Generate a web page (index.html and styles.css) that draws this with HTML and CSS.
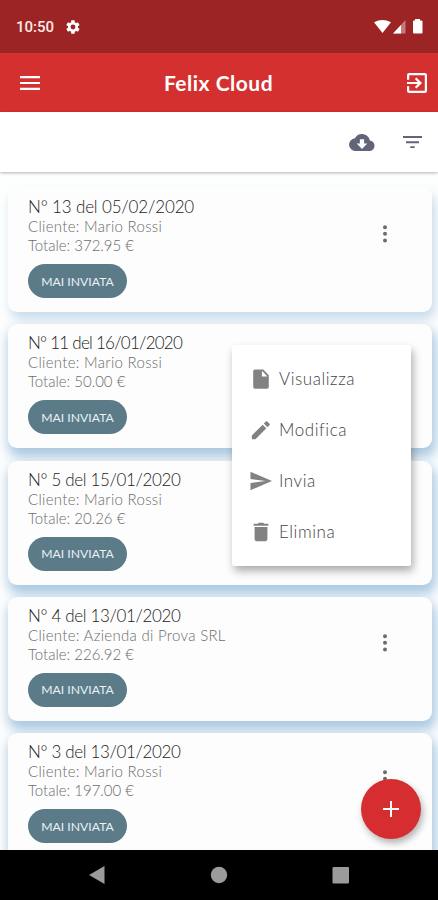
FILE: index.html
```
<!DOCTYPE html>
<html lang="it">
<head>
    <meta charset="UTF-8">
    <meta name="viewport" content="width=device-width, initial-scale=1.0">
    <title>Felix Cloud</title>
    <link rel="stylesheet" href="styles.css">
</head>
<body>
    <div class="status-bar">
        <span class="clock">10:50</span>
        <svg class="status-gear" viewBox="0 0 24 24"><path fill-rule="evenodd" d="M19.4 13a7.500 7.500 0 0 0 0-2l2.100-1.600a.5.5 0 0 0 .1-.7l-2-3.400a.5.5 0 0 0-.6-.2l-2.500 1a7.300 7.300 0 0 0-1.700-1L14.400 2.400a.5.5 0 0 0-.5-.4h-4a.5.5 0 0 0-.5.4L9 5.100a7.300 7.300 0 0 0-1.700 1l-2.500-1a.5.5 0 0 0-.6.2l-2 3.400a.5.500 0 0 0 .1.700L4.500 11a7.500 7.500 0 0 0 0 2l-2.200 1.600a.5.5 0 0 0-.1.700l2 3.400a.5.5 0 0 0 .6.2l2.500-1a7.300 7.300 0 0 0 1.700 1l.4 2.700a.5.5 0 0 0 .5.4h4a.5.5 0 0 0 .5-.4l.4-2.700a7.300 7.300 0 0 0 1.700-1l2.500 1a.5.5 0 0 0 .6-.2l2-3.400a.5.5 0 0 0-.1-.7zM12 15.600a3.600 3.600 0 1 1 0-7.200 3.600 3.600 0 0 1 0 7.200z"/></svg>
        <svg class="status-signals" viewBox="0 0 50 16">
            <path d="M0 3.200Q8.500-1.400 17 3.200L8.500 14z"/>
            <path opacity=".4" d="M31.500 1v13.500H19z"/>
            <path d="M27 6v8.500H19z"/>
            <path d="M41 1.500V0h5v1.500h1.500q1 0 1 1v11q0 1-1 1h-7.500q-1 0-1-1v-11q0-1 1-1z"/>
        </svg>
    </div>

    <header class="app-bar">
        <svg class="icon-menu" viewBox="0 0 20 14"><path d="M0 0h20v2.200H0zM0 5.900h20v2.200H0zM0 11.800h20V14H0z"/></svg>
        <h1 class="app-title">Felix Cloud</h1>
        <svg class="icon-exit" viewBox="3 3 18 18"><path d="M10.090 15.590L11.500 17l5-5-5-5-1.410 1.410L12.670 11H3v2h9.670l-2.580 2.590zM19 3H5a2 2 0 0 0-2 2v4h2V5h14v14H5v-4H3v4a2 2 0 0 0 2 2h14a2 2 0 0 0 2-2V5a2 2 0 0 0-2-2z"/></svg>
    </header>

    <div class="toolbar">
        <svg class="icon-cloud" viewBox="0 4 24 16"><path d="M19.350 10.040A7.490 7.490 0 0 0 12 4a7.500 7.500 0 0 0-6.650 4.040A5.990 5.990 0 0 0 6 20h13a5 5 0 0 0 .35-9.960zM17 13l-5 5-5-5h3V9h4v4h3z"/></svg>
        <svg class="icon-filter" viewBox="0 0 19 12"><path d="M0 0h19v2H0zM3 5.200h13v2H3zM7.300 10.300h4.400v1.900H7.300z"/></svg>
    </div>

    <main class="list">
        <article class="card card-first">
            <div class="info">
                <h2>N° 13 del 05/02/2020</h2>
                <p class="client">Cliente: Mario Rossi</p>
                <p>Totale: 372.95 €</p>
                <span class="badge">MAI INVIATA</span>
            </div>
            <svg class="dots" viewBox="0 0 4 18"><circle cx="2" cy="2.200" r="2"/><circle cx="2" cy="8.800" r="2"/><circle cx="2" cy="15.400" r="2"/></svg>
        </article>
        <article class="card">
            <div class="info">
                <h2 class="narrow">N° 11 del 16/01/2020</h2>
                <p class="client">Cliente: Mario Rossi</p>
                <p>Totale: 50.00 €</p>
                <span class="badge">MAI INVIATA</span>
            </div>
        </article>
        <article class="card">
            <div class="info">
                <h2>N° 5 del 15/01/2020</h2>
                <p class="client">Cliente: Mario Rossi</p>
                <p>Totale: 20.26 €</p>
                <span class="badge">MAI INVIATA</span>
            </div>
        </article>
        <article class="card">
            <div class="info">
                <h2>N° 4 del 13/01/2020</h2>
                <p class="client">Cliente: Azienda di Prova SRL</p>
                <p>Totale: 226.92 €</p>
                <span class="badge">MAI INVIATA</span>
            </div>
            <svg class="dots" viewBox="0 0 4 18"><circle cx="2" cy="2.200" r="2"/><circle cx="2" cy="8.800" r="2"/><circle cx="2" cy="15.400" r="2"/></svg>
        </article>
        <article class="card">
            <div class="info">
                <h2>N° 3 del 13/01/2020</h2>
                <p class="client">Cliente: Mario Rossi</p>
                <p>Totale: 197.00 €</p>
                <span class="badge">MAI INVIATA</span>
            </div>
            <svg class="dots" viewBox="0 0 4 18"><circle cx="2" cy="2.200" r="2"/><circle cx="2" cy="8.800" r="2"/><circle cx="2" cy="15.400" r="2"/></svg>
        </article>
    </main>

    <div class="popup">
        <div class="popup-item">
            <svg viewBox="0 0 24 24"><path fill-rule="evenodd" d="M5 1.500h9.500L20.500 8v12.500a2 2 0 0 1-2 2h-13a2 2 0 0 1-2-2V3.500a2 2 0 0 1 2-2zM13 3v6.200h6z"/></svg>
            <span>Visualizza</span>
        </div>
        <div class="popup-item">
            <svg viewBox="0 0 24 24"><path d="M2 18v4h4L17.800 10.200l-4-4zM21.400 6.600a1.100 1.100 0 0 0 0-1.500l-2.500-2.500a1.100 1.100 0 0 0-1.500 0l-2.300 2.300 4 4z"/></svg>
            <span>Modifica</span>
        </div>
        <div class="popup-item">
            <svg viewBox="0 0 24 24"><path d="M.5 22L24 12 .5 2v7.800L17 12 .5 14.200z"/></svg>
            <span>Invia</span>
        </div>
        <div class="popup-item">
            <svg viewBox="0 0 24 24"><path d="M5 6.500h14V20a2 2 0 0 1-2 2H7a2 2 0 0 1-2-2zM4 3h4.500l1-1.200h5l1 1.200H20v2.300H4z"/></svg>
            <span>Elimina</span>
        </div>
    </div>

    <button class="fab" aria-label="Aggiungi">
        <svg viewBox="0 0 16 16"><path d="M7 0h2v7h7v2H9v7H7V9H0V7h7z"/></svg>
    </button>

    <nav class="nav-bar">
        <svg viewBox="0 0 18 18"><path d="M16.500 0v18L1 9z"/></svg>
        <svg viewBox="0 0 18 18"><circle cx="9" cy="9" r="8.200"/></svg>
        <svg viewBox="0 0 18 18"><rect x="0.500" y="1" width="16.500" height="16.500" rx="1"/></svg>
    </nav>
</body>
</html>
```
FILE: styles.css
```
* {
    margin: 0;
    padding: 0;
    box-sizing: border-box;
}

body {
    position: relative;
    width: 438px;
    height: 900px;
    overflow: hidden;
    display: flex;
    flex-direction: column;
    background: #fdfefe;
    font-family: Lato, "Open Sans", sans-serif;
}

svg {
    display: block;
    flex: none;
    fill: currentColor;
}

.status-bar {
    height: 53px;
    flex: none;
    display: flex;
    align-items: center;
    padding: 1px 14px 0 16px;
    background: #9c2425;
    color: #fff;
}

.clock {
    font: 500 15px Roboto, sans-serif;
    color: #fbe9e6;
    width: 49px;
}

.status-gear {
    width: 16px;
    height: 16px;
}

.status-signals {
    width: 50px;
    height: 16px;
    margin-left: auto;
}

.app-bar {
    height: 59px;
    flex: none;
    display: flex;
    align-items: center;
    padding: 0 11px 0 20px;
    background: #d53030;
    color: #fff;
}

.icon-menu {
    width: 20px;
    height: 14px;
}

.app-title {
    flex: 1;
    padding-right: 2px;
    font-size: 21px;
    font-weight: 700;
    line-height: 28px;
    letter-spacing: 0.5px;
    text-align: center;
    text-indent: -8px;
}

.icon-exit {
    width: 20px;
    height: 20px;
}

.toolbar {
    position: relative;
    height: 60px;
    flex: none;
    display: flex;
    align-items: center;
    justify-content: flex-end;
    gap: 28px;
    padding: 0 16px 0 0;
    background: #fff;
    box-shadow: 0 1px 3px rgba(0, 0, 0, 0.3);
    color: #62647a;
}

.icon-cloud {
    width: 26px;
    height: 17px;
}

.icon-filter {
    width: 19px;
    height: 12px;
}

.list {
    flex: 1;
    min-height: 0;
    overflow: hidden;
    display: flex;
    flex-direction: column;
    gap: 12.3px;
    padding: 15px 6px 0 8px;
}

.card {
    height: 124px;
    flex: none;
    display: flex;
    justify-content: space-between;
    padding: 8px 45px 0 20px;
    background: #fdfdfd;
    border-radius: 9px;
    box-shadow: 2px 7px 12px 2px rgba(115, 165, 205, 0.6);
}

.card-first {
    height: 125px;
    padding-top: 9px;
    box-shadow: 3px 7px 11px rgba(120, 165, 205, 0.4);
}

.card h2 {
    font-size: 17px;
    font-weight: 300;
    line-height: 22px;
    letter-spacing: -0.35px;
    color: #222;
    white-space: nowrap;
}

.card-first h2 {
    letter-spacing: -0.15px;
}

.card h2.narrow {
    letter-spacing: -0.75px;
}

.card p {
    font-size: 15px;
    font-weight: 300;
    line-height: 19px;
    color: #6c6c6c;
    white-space: nowrap;
}

.card h2 + p {
    margin-top: -1px;
}

.card .client {
    letter-spacing: 0.3px;
}

.badge {
    display: flex;
    align-items: center;
    justify-content: center;
    width: 99px;
    height: 34px;
    margin-top: 9px;
    border-radius: 17px;
    background: #5c7b89;
    color: #e9f2f5;
    font-size: 12.2px;
}

.dots {
    width: 4px;
    height: 18px;
    margin-top: 29px;
    color: #6c6c6c;
}

.popup {
    position: absolute;
    left: 232px;
    top: 345px;
    width: 179px;
    height: 221px;
    padding: 8px 18px;
    background: #fff;
    border-radius: 2px;
    box-shadow: 2px 5px 9px rgba(0, 0, 0, 0.32);
}

.popup-item {
    display: flex;
    align-items: center;
    gap: 7px;
    height: 51px;
    font-size: 17px;
    font-weight: 300;
    letter-spacing: 0.55px;
    color: #444;
}

.popup-item svg {
    width: 22px;
    height: 22px;
    color: #828282;
}

.fab {
    position: absolute;
    left: 361px;
    top: 779px;
    width: 60px;
    height: 60px;
    display: flex;
    align-items: center;
    justify-content: center;
    border: none;
    border-radius: 50%;
    background: #d62e30;
    color: #fff;
    box-shadow: 2px 4px 7px rgba(0, 0, 0, 0.3);
}

.fab svg {
    width: 16px;
    height: 16px;
}

.nav-bar {
    height: 50px;
    flex: none;
    display: flex;
    align-items: center;
    justify-content: space-between;
    padding: 0 88px;
    background: #000;
    color: #9b9b9b;
}

.nav-bar svg {
    width: 18px;
    height: 18px;
}
```
